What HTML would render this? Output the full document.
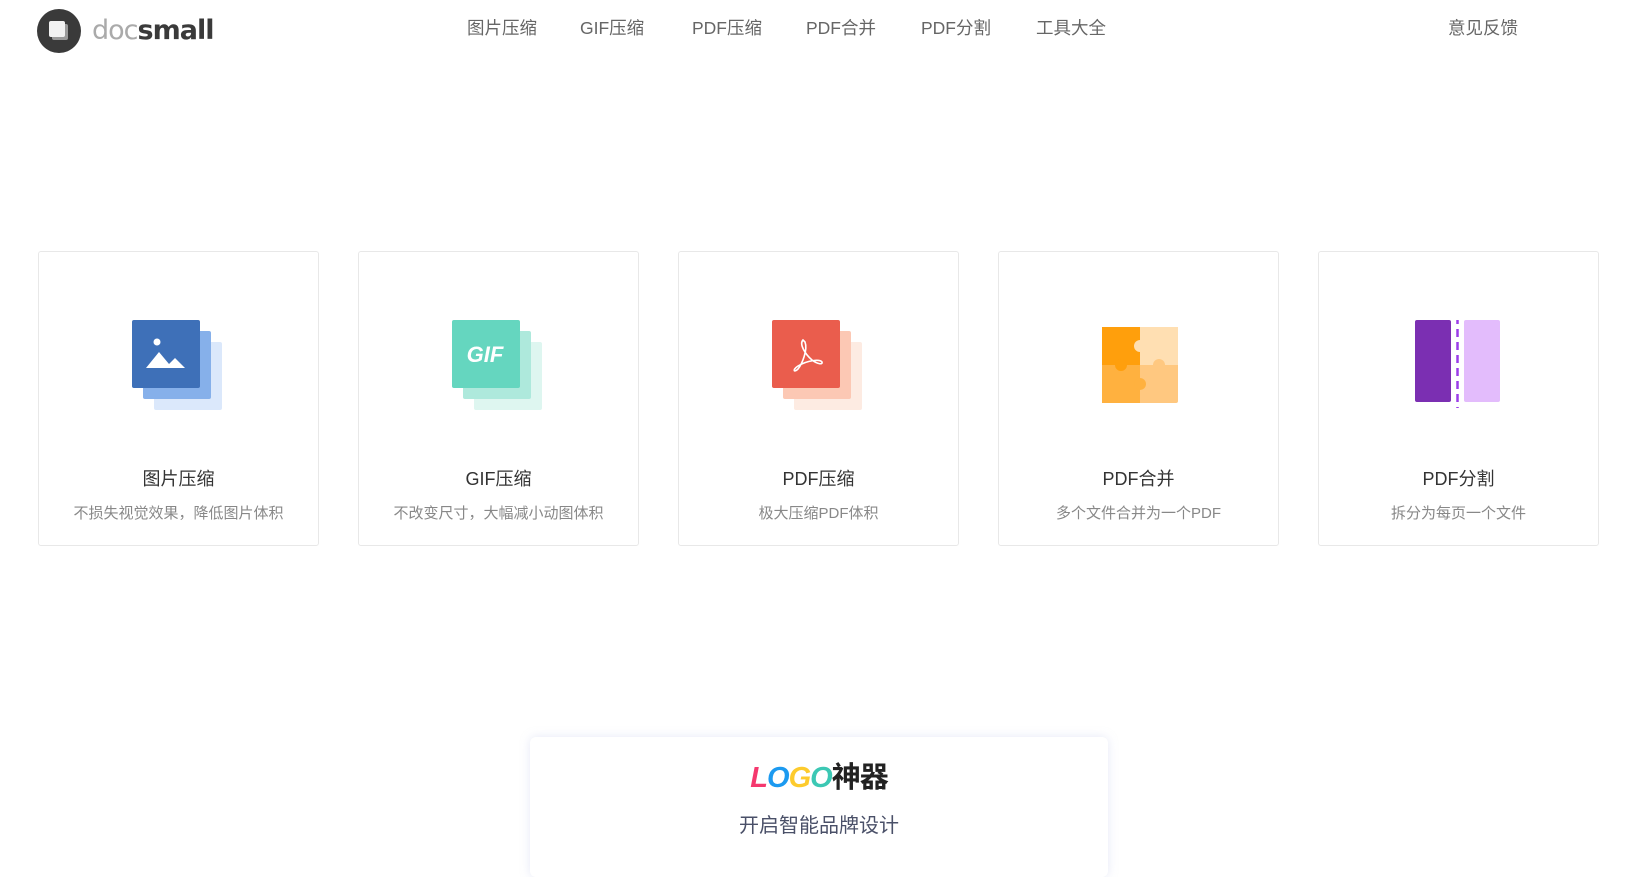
<!DOCTYPE html>
<html><head><meta charset="utf-8"><style>
*{margin:0;padding:0;box-sizing:border-box}
body{width:1636px;height:856px;overflow:hidden;background:#fff;font-family:"Liberation Sans","Noto Sans CJK SC",sans-serif;position:relative}
.nav{position:absolute;top:16px;font-size:17.5px;color:#666;line-height:24px;white-space:nowrap}
.card{position:absolute;top:251px;width:281px;height:295px;border:1px solid #e8e8e8;border-radius:3px;text-align:center}
.card svg{position:absolute;left:93px;top:68px}
.card .t{position:absolute;top:216px;left:0;right:0;font-size:18px;color:#333;line-height:22px}
.card .s{position:absolute;top:252px;left:0;right:0;font-size:15px;color:#888;line-height:20px}
</style></head><body>
<svg style="position:absolute;left:37px;top:9px" width="44" height="44" viewBox="0 0 44 44"><circle cx="22" cy="22" r="22" fill="#3a3a3a"/><rect x="15" y="15" width="16" height="16" rx="2" fill="#9a9a9a"/><rect x="12" y="12" width="16" height="16" rx="2" fill="#f2f2f2"/></svg>
<div style="position:absolute;left:92px;top:14px;font-size:27px;line-height:34px;font-family:'DejaVu Sans','Liberation Sans',sans-serif;letter-spacing:-1px"><span style="color:#aaa">doc</span><span style="color:#3a3a3a;font-weight:bold">small</span></div>
<div class="nav" style="left:467px">图片压缩</div>
<div class="nav" style="left:580px">GIF压缩</div>
<div class="nav" style="left:692px">PDF压缩</div>
<div class="nav" style="left:806px">PDF合并</div>
<div class="nav" style="left:921px">PDF分割</div>
<div class="nav" style="left:1036px">工具大全</div>
<div class="nav" style="left:1448px">意见反馈</div>

<div class="card" style="left:38px"><svg width="92" height="92" viewBox="0 0 92 92"><rect x="22" y="22" width="68" height="68" rx="2" fill="#dbe8fb"/><rect x="11" y="11" width="68" height="68" rx="2" fill="#86b0ea"/><rect x="0" y="0" width="68" height="68" rx="2" fill="#3e70b8"/><circle cx="25" cy="22" r="3.5" fill="#fff"/><path d="M14 48 L27 32 L37 44 L43 38 L53 48 Z" fill="#fff"/></svg><div class="t">图片压缩</div><div class="s">不损失视觉效果，降低图片体积</div></div>

<div class="card" style="left:358px"><svg width="92" height="92" viewBox="0 0 92 92"><rect x="22" y="22" width="68" height="68" rx="2" fill="#def6f0"/><rect x="11" y="11" width="68" height="68" rx="2" fill="#aee9dc"/><rect x="0" y="0" width="68" height="68" rx="2" fill="#65d6bf"/><text x="33" y="42" text-anchor="middle" font-family="Liberation Sans" font-weight="bold" font-style="italic" font-size="22" fill="#fff">GIF</text></svg><div class="t">GIF压缩</div><div class="s">不改变尺寸，大幅减小动图体积</div></div>

<div class="card" style="left:678px"><svg width="92" height="92" viewBox="0 0 92 92"><rect x="22" y="22" width="68" height="68" rx="2" fill="#fdebe2"/><rect x="11" y="11" width="68" height="68" rx="2" fill="#fcc8b4"/><rect x="0" y="0" width="68" height="68" rx="2" fill="#ea5d4d"/><path d="M31 20 C27 24 33 34 40 40 C45 44 51 45 50 42 C48 39 36 40 26 46 C20 50 22 53 26 49 C30 44 36 30 33 22 Z" fill="none" stroke="#fff" stroke-width="1.6"/></svg><div class="t">PDF压缩</div><div class="s">极大压缩PDF体积</div></div>

<div class="card" style="left:998px"><svg width="92" height="92" viewBox="0 0 92 92"><g transform="translate(10,7)"><rect x="0" y="0" width="76" height="76" rx="2" fill="#ffc880"/><rect x="38" y="0" width="38" height="38" fill="#ffdfb2"/><rect x="0" y="0" width="38" height="38" fill="#ff9f0c"/><rect x="0" y="38" width="38" height="38" fill="#ffb13f"/><circle cx="38" cy="19" r="6" fill="#ffdfb2"/><circle cx="19" cy="38" r="6" fill="#ff9f0c"/><circle cx="57" cy="38" r="6" fill="#ffc880"/><circle cx="38" cy="57" r="6" fill="#ffb13f"/></g></svg><div class="t">PDF合并</div><div class="s">多个文件合并为一个PDF</div></div>

<div class="card" style="left:1318px"><svg width="92" height="96" viewBox="0 0 92 96"><rect x="3" y="0" width="36" height="82" rx="2" fill="#7b2fb2"/><rect x="52" y="0" width="36" height="82" rx="2" fill="#e3bcfc"/><line x1="45.5" y1="-4" x2="45.5" y2="88" stroke="#9b3de8" stroke-width="2.5" stroke-dasharray="8 5"/></svg><div class="t">PDF分割</div><div class="s">拆分为每页一个文件</div></div>

<div style="position:absolute;left:530px;top:737px;width:578px;height:140px;background:#fff;border-radius:6px;box-shadow:0 0 10px rgba(180,190,230,0.35)"></div>
<div style="position:absolute;left:530px;width:578px;text-align:center;top:762px;font-size:29px;line-height:32px;font-weight:bold;font-style:italic;font-family:'Liberation Sans','Noto Sans CJK SC',sans-serif;letter-spacing:-1px"><span style="color:#f5386e">L</span><span style="color:#1c9af0">O</span><span style="color:#fdcb2d">G</span><span style="color:#3cc8b4">O</span><span style="color:#222;font-style:normal">神器</span></div>
<div style="position:absolute;left:530px;width:578px;top:813px;text-align:center;font-size:20px;line-height:26px;color:#4a5068">开启智能品牌设计</div>
</body></html>
